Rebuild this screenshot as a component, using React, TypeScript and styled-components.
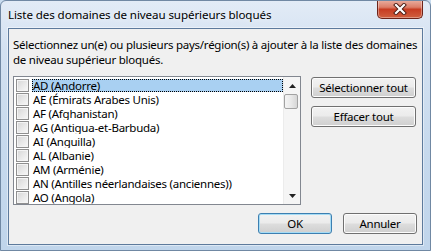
import React from "react";
import styled, { createGlobalStyle } from "styled-components";

const Global = createGlobalStyle`
  html, body { margin: 0; padding: 0; background: #c9dcef; }
  body { font-family: "Noto Sans", "Open Sans", sans-serif; font-size: 11.5px; color: #000; }
`;

const Window = styled.div`
  width: 431px;
  height: 251px;
  box-sizing: border-box;
  display: flex;
  flex-direction: column;
  background: linear-gradient(180deg, #e2ebf6 0%, #d3e1f1 20%, #c6d9ed 60%, #c0d5eb 100%);
  border: 1px solid #7088a3;
  border-radius: 6px 6px 0 0;
  padding: 0 7px 5px 7px;
  overflow: hidden;
`;

const TitleBar = styled.div`
  height: 27px;
  flex: 0 0 27px;
  display: flex;
  align-items: flex-start;
  justify-content: space-between;
`;

const Title = styled.div`
  font-family: "Noto Sans", sans-serif;
  font-size: 11.6px;
  letter-spacing: -0.1px;
  color: #000;
  margin-top: 6px;
  white-space: nowrap;
  text-shadow: 0 0 6px rgba(255,255,255,0.9);
`;

const CloseButton = styled.div`
  width: 46px;
  height: 19px;
  margin-top: -1px;
  box-sizing: border-box;
  border: 1px solid #6c2319;
  border-top: none;
  border-radius: 0 0 5px 5px;
  background: linear-gradient(180deg, #eab0a2 0%, #dc7d68 40%, #c73c22 52%, #d0603f 100%);
  box-shadow: inset 0 0 0 1px rgba(255,255,255,0.35);
  display: flex;
  align-items: center;
  justify-content: center;
`;

const Client = styled.div`
  flex: 1;
  display: flex;
  flex-direction: column;
  background: #f0f0f0;
  border: 1px solid #5d7a9c;
  box-shadow: 0 0 0 1px rgba(255,255,255,0.45);
  padding: 8px 5px 10px 4px;
  box-sizing: border-box;
`;

const Description = styled.div`
  line-height: 15px;
  margin-bottom: 9px;
  letter-spacing: -0.25px;
  white-space: nowrap;
`;

const MainRow = styled.div`
  display: flex;
  gap: 10px;
  align-items: flex-start;
`;

const ListBox = styled.div`
  width: 288px;
  height: 129px;
  box-sizing: border-box;
  border: 1px solid #828790;
  background: #fff;
  display: flex;
`;

const Items = styled.div`
  flex: 1;
  padding-top: 1px;
  overflow: hidden;
`;

const Row = styled.div`
  height: 14px;
  display: flex;
  align-items: center;
  padding-left: 2px;
  gap: 3px;
  white-space: nowrap;
  overflow: hidden;
`;

const Check = styled.span`
  width: 13px;
  height: 13px;
  box-sizing: border-box;
  border: 1px solid #8f8f8f;
  background: linear-gradient(135deg, #d6d6d6 0%, #ebebeb 60%, #f8f8f8 100%);
  box-shadow: inset 0 0 0 1px #f4f4f4;
  flex: 0 0 13px;
`;

const Label = styled.span<{ $selected?: boolean }>`
  flex: ${(p) => (p.$selected ? 1 : "0 0 auto")};
  height: 13px;
  line-height: 13px;
  padding: 0 1px;
  letter-spacing: -0.25px;
  box-sizing: border-box;
  background: ${(p) => (p.$selected ? "#a9d0f2" : "transparent")};
  outline: ${(p) => (p.$selected ? "1px dotted #000" : "none")};
  outline-offset: -1px;
`;

const ScrollBar = styled.div`
  width: 17px;
  flex: 0 0 17px;
  display: flex;
  flex-direction: column;
  background: #f5f5f5;
  border-left: 1px solid #ececec;
  box-sizing: border-box;
`;

const ArrowBtn = styled.div`
  height: 17px;
  display: flex;
  align-items: center;
  justify-content: center;
`;

const Track = styled.div`
  flex: 1;
  display: flex;
  flex-direction: column;
`;

const Thumb = styled.div`
  height: 15px;
  margin: 0 2px 0 0;
  box-sizing: border-box;
  border: 1px solid #a2a2a2;
  border-radius: 2px;
  background: linear-gradient(90deg, #f4f4f4 0%, #e9e9e9 50%, #d6d6d6 100%);
`;

const SideButtons = styled.div`
  display: flex;
  flex-direction: column;
  gap: 8px;
  padding-top: 1px;
`;

const Button = styled.button<{ $w: number; $default?: boolean }>`
  width: ${(p) => p.$w}px;
  height: 21px;
  box-sizing: border-box;
  font-family: "Noto Sans", sans-serif;
  font-size: 11.5px;
  letter-spacing: -0.25px;
  color: #000;
  padding: 0;
  border-radius: 3px;
  border: 1px solid ${(p) => (p.$default ? "#3c7fb1" : "#707070")};
  background: linear-gradient(180deg, #f2f2f2 0%, #ebebeb 48%, #dddddd 52%, #cfcfcf 100%);
  box-shadow: inset 0 0 0 1px ${(p) => (p.$default ? "#a6dcf5" : "#fcfcfc")};
  line-height: 17px;
`;

const Footer = styled.div`
  margin-top: auto;
  display: flex;
  justify-content: flex-end;
  gap: 11px;
`;

const items = [
  "AD (Andorre)",
  "AE (Émirats Arabes Unis)",
  "AF (Afghanistan)",
  "AG (Antigua-et-Barbuda)",
  "AI (Anguilla)",
  "AL (Albanie)",
  "AM (Arménie)",
  "AN (Antilles néerlandaises (anciennes))",
  "AO (Angola)",
];

export default function App() {
  return (
    <>
      <Global />
      <Window>
        <TitleBar>
          <Title>Liste des domaines de niveau supérieurs bloqués</Title>
          <CloseButton>
            <svg width="14" height="12" viewBox="0 0 14 12">
              <path d="M3 2 L11 10 M11 2 L3 10" stroke="#4a1a12" strokeWidth="4" strokeLinecap="square" />
              <path d="M3 2 L11 10 M11 2 L3 10" stroke="#fff" strokeWidth="2.2" strokeLinecap="square" />
            </svg>
          </CloseButton>
        </TitleBar>
        <Client>
          <Description>
            Sélectionnez un(e) ou plusieurs pays/région(s) à ajouter à la liste des domaines
            <br />
            de niveau supérieur bloqués.
          </Description>
          <MainRow>
            <ListBox>
              <Items>
                {items.map((it, i) => (
                  <Row key={it}>
                    <Check />
                    <Label $selected={i === 0}>{it}</Label>
                  </Row>
                ))}
              </Items>
              <ScrollBar>
                <ArrowBtn>
                  <svg width="7" height="4" viewBox="0 0 7 4">
                    <path d="M0 4 L3.5 0 L7 4 Z" fill="#222" />
                  </svg>
                </ArrowBtn>
                <Track>
                  <Thumb />
                </Track>
                <ArrowBtn>
                  <svg width="7" height="4" viewBox="0 0 7 4">
                    <path d="M0 0 L7 0 L3.5 4 Z" fill="#222" />
                  </svg>
                </ArrowBtn>
              </ScrollBar>
            </ListBox>
            <SideButtons>
              <Button $w={105}>Sélectionner tout</Button>
              <Button $w={105}>Effacer tout</Button>
            </SideButtons>
          </MainRow>
          <Footer>
            <Button $w={74} $default>OK</Button>
            <Button $w={74}>Annuler</Button>
          </Footer>
        </Client>
      </Window>
    </>
  );
}
